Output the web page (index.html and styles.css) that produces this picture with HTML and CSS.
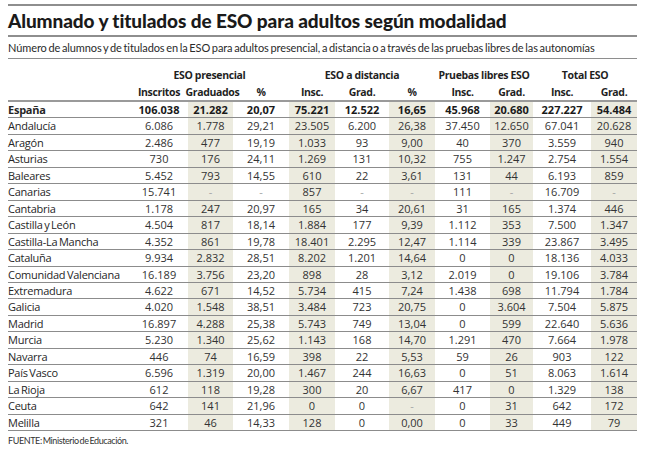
FILE: index.html
```html
<!DOCTYPE html>
<html lang="es">
<head>
<meta charset="utf-8">
<title>Alumnado y titulados de ESO para adultos</title>
<link rel="stylesheet" href="styles.css">
</head>
<body>
<div class="page">
  <h1 class="title">Alumnado y titulados de ESO para adultos según modalidad</h1>
  <p class="subtitle">Número de alumnos y de titulados en la ESO para adultos presencial, a distancia o a través de las pruebas libres de las autonomías</p>
  <table class="data">
    <colgroup>
      <col class="c-name"><col class="c-w58"><col class="c-w45"><col class="c-w56"><col class="c-w46"><col class="c-w54"><col class="c-w46"><col class="c-w55"><col class="c-w43"><col class="c-w58"><col class="c-w46">
    </colgroup>
    <thead>
      <tr class="group">
        <th></th>
        <th colspan="3">ESO presencial</th>
        <th colspan="3">ESO a distancia</th>
        <th colspan="2">Pruebas libres ESO</th>
        <th colspan="2">Total ESO</th>
      </tr>
      <tr class="sub">
        <th></th>
        <th>Inscritos</th>
        <th><span class="wide">Graduados</span></th>
        <th>%</th>
        <th>Insc.</th>
        <th>Grad.</th>
        <th>%</th>
        <th>Insc.</th>
        <th>Grad.</th>
        <th>Insc.</th>
        <th>Grad.</th>
      </tr>
    </thead>
    <tbody>
      <tr class="total"><td>España</td><td>106.038</td><td>21.282</td><td>20,07</td><td>75.221</td><td>12.522</td><td>16,65</td><td>45.968</td><td>20.680</td><td>227.227</td><td>54.484</td></tr>
      <tr><td>Andalucía</td><td>6.086</td><td>1.778</td><td>29,21</td><td>23.505</td><td>6.200</td><td>26,38</td><td>37.450</td><td>12.650</td><td>67.041</td><td>20.628</td></tr>
      <tr><td>Aragón</td><td>2.486</td><td>477</td><td>19,19</td><td>1.033</td><td>93</td><td>9,00</td><td>40</td><td>370</td><td>3.559</td><td>940</td></tr>
      <tr><td>Asturias</td><td>730</td><td>176</td><td>24,11</td><td>1.269</td><td>131</td><td>10,32</td><td>755</td><td>1.247</td><td>2.754</td><td>1.554</td></tr>
      <tr><td>Baleares</td><td>5.452</td><td>793</td><td>14,55</td><td>610</td><td>22</td><td>3,61</td><td>131</td><td>44</td><td>6.193</td><td>859</td></tr>
      <tr><td>Canarias</td><td>15.741</td><td class="na">-</td><td class="na">-</td><td>857</td><td class="na">-</td><td class="na">-</td><td>111</td><td class="na">-</td><td>16.709</td><td class="na">-</td></tr>
      <tr><td>Cantabria</td><td>1.178</td><td>247</td><td>20,97</td><td>165</td><td>34</td><td>20,61</td><td>31</td><td>165</td><td>1.374</td><td>446</td></tr>
      <tr><td>Castilla y León</td><td>4.504</td><td>817</td><td>18,14</td><td>1.884</td><td>177</td><td>9,39</td><td>1.112</td><td>353</td><td>7.500</td><td>1.347</td></tr>
      <tr><td>Castilla-La Mancha</td><td>4.352</td><td>861</td><td>19,78</td><td>18.401</td><td>2.295</td><td>12,47</td><td>1.114</td><td>339</td><td>23.867</td><td>3.495</td></tr>
      <tr><td>Cataluña</td><td>9.934</td><td>2.832</td><td>28,51</td><td>8.202</td><td>1.201</td><td>14,64</td><td>0</td><td>0</td><td>18.136</td><td>4.033</td></tr>
      <tr><td>Comunidad Valenciana</td><td>16.189</td><td>3.756</td><td>23,20</td><td>898</td><td>28</td><td>3,12</td><td>2.019</td><td>0</td><td>19.106</td><td>3.784</td></tr>
      <tr><td>Extremadura</td><td>4.622</td><td>671</td><td>14,52</td><td>5.734</td><td>415</td><td>7,24</td><td>1.438</td><td>698</td><td>11.794</td><td>1.784</td></tr>
      <tr><td>Galicia</td><td>4.020</td><td>1.548</td><td>38,51</td><td>3.484</td><td>723</td><td>20,75</td><td>0</td><td>3.604</td><td>7.504</td><td>5.875</td></tr>
      <tr><td>Madrid</td><td>16.897</td><td>4.288</td><td>25,38</td><td>5.743</td><td>749</td><td>13,04</td><td>0</td><td>599</td><td>22.640</td><td>5.636</td></tr>
      <tr><td>Murcia</td><td>5.230</td><td>1.340</td><td>25,62</td><td>1.143</td><td>168</td><td>14,70</td><td>1.291</td><td>470</td><td>7.664</td><td>1.978</td></tr>
      <tr><td>Navarra</td><td>446</td><td>74</td><td>16,59</td><td>398</td><td>22</td><td>5,53</td><td>59</td><td>26</td><td>903</td><td>122</td></tr>
      <tr><td>País Vasco</td><td>6.596</td><td>1.319</td><td>20,00</td><td>1.467</td><td>244</td><td>16,63</td><td>0</td><td>51</td><td>8.063</td><td>1.614</td></tr>
      <tr><td>La Rioja</td><td>612</td><td>118</td><td>19,28</td><td>300</td><td>20</td><td>6,67</td><td>417</td><td>0</td><td>1.329</td><td>138</td></tr>
      <tr><td>Ceuta</td><td>642</td><td>141</td><td>21,96</td><td>0</td><td>0</td><td class="na">-</td><td>0</td><td>31</td><td>642</td><td>172</td></tr>
      <tr><td>Melilla</td><td>321</td><td>46</td><td>14,33</td><td>128</td><td>0</td><td>0,00</td><td>0</td><td>33</td><td>449</td><td>79</td></tr>
    </tbody>
  </table>
  <p class="source">FUENTE: Ministerio de Educación.</p>
</div>
</body>
</html>
```
FILE: styles.css
```css
html, body {
  margin: 0;
  padding: 0;
  background: #ffffff;
}

body {
  font-family: "Open Sans", "DejaVu Sans", sans-serif;
  color: #2a2a2a;
}

.page {
  width: 629px;
  margin-left: 8px;
  padding-top: 4px;
}

.title {
  margin: 0;
  border-top: 2px solid #8e8e8e;
  border-bottom: 2px solid #8e8e8e;
  font-family: Lato, "Open Sans", sans-serif;
  font-weight: 900;
  font-size: 19px;
  line-height: 29px;
  letter-spacing: -0.1px;
  color: #1a1a1a;
}

.subtitle {
  margin: 0;
  border-bottom: 1px solid #8e8e8e;
  font-family: Lato, "Open Sans", sans-serif;
  font-size: 11px;
  line-height: 21px;
  letter-spacing: -0.1px;
  word-spacing: -1px;
  color: #2a2a2a;
}

.data {
  width: 629px;
  margin-top: 7px;
  table-layout: fixed;
  border-collapse: separate;
  border-spacing: 0;
}

.c-name { width: 122px; }
.c-w58 { width: 58px; }
.c-w45 { width: 45px; }
.c-w56 { width: 56px; }
.c-w46 { width: 46px; }
.c-w54 { width: 54px; }
.c-w55 { width: 55px; }
.c-w43 { width: 43px; }

.data th {
  padding: 0;
  font-size: 10.5px;
  font-weight: 700;
  text-align: center;
  white-space: nowrap;
  color: #1f1f1f;
  letter-spacing: -0.35px;
}

.group th {
  height: 18px;
  line-height: 18px;
}

.sub th {
  height: 16px;
  line-height: 16px;
  border-bottom: 2px solid #9a9a9a;
}

.wide {
  display: inline-block;
  margin: 0 -10px 0 -6px;
}

.data td {
  box-sizing: border-box;
  height: 16.45px;
  padding: 0;
  font-size: 11px;
  line-height: 15.45px;
  text-align: center;
  white-space: nowrap;
  border-bottom: 1px solid #8c8c8c;
  color: #333333;
}

.data td:first-child {
  text-align: left;
  letter-spacing: -0.25px;
  word-spacing: -1px;
  color: #262626;
}

.data td:nth-child(odd):not(:first-child) {
  background: #ecebdf;
}

.data td.na {
  color: #a5a5a5;
}

.total td {
  font-weight: 700;
  color: #1a1a1a;
}

.source {
  margin: 3px 0 0;
  font-family: Lato, "Open Sans", sans-serif;
  font-size: 9px;
  line-height: 14px;
  letter-spacing: -0.4px;
  word-spacing: -1px;
  color: #333333;
}
```
